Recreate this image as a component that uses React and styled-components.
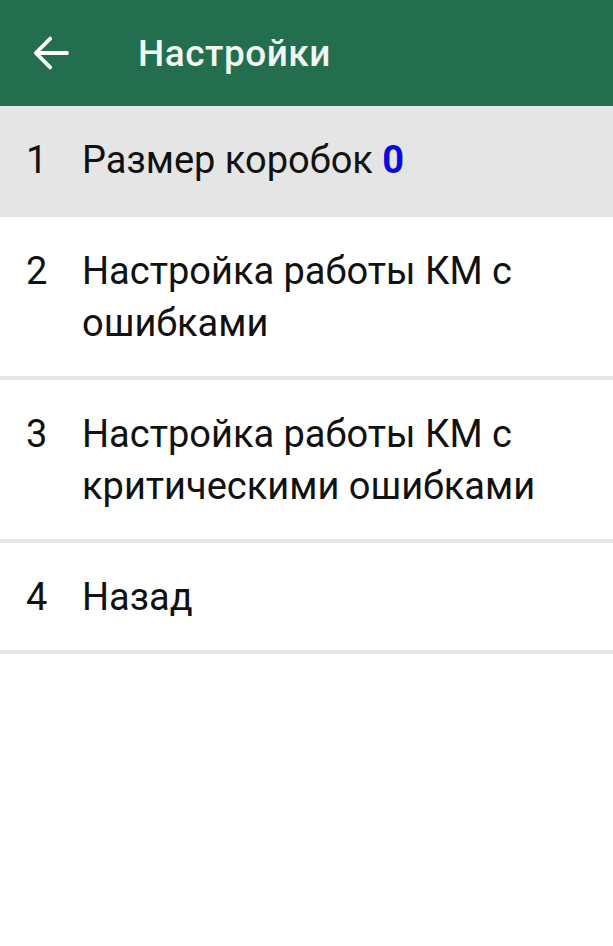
import React from "react";
import styled, { createGlobalStyle } from "styled-components";

const Global = createGlobalStyle`
  html, body { margin: 0; padding: 0; background: #ffffff; }
  body { font-family: Roboto, "Noto Sans", Arial, sans-serif; }
`;

const Screen = styled.div`
  width: 613px;
  min-height: 946px;
  background: #ffffff;
  display: flex;
  flex-direction: column;
`;

const AppBar = styled.header`
  height: 106px;
  background: #226e4f;
  display: flex;
  align-items: center;
  padding-left: 27px;
  box-sizing: border-box;
`;

const BackButton = styled.button`
  width: 48px;
  height: 48px;
  padding: 0;
  border: none;
  background: transparent;
  display: flex;
  align-items: center;
  justify-content: center;
  color: #ffffff;
  margin-right: 63px;
`;

const Title = styled.h1`
  margin: 0;
  font-family: Roboto, sans-serif;
  font-weight: 500;
  font-size: 37px;
  color: #f1f7f3;
  letter-spacing: 0.5px;
`;

const Menu = styled.ul`
  list-style: none;
  margin: 0;
  padding: 0;
`;

const Item = styled.li`
  display: grid;
  grid-template-columns: 56px 1fr;
  padding: 27.5px 20px 27.5px 26px;
  font-family: Roboto, sans-serif;
  font-size: 38px;
  line-height: 52px;
  color: #111111;
  background: ${(p) => (p.$active ? "#e5e5e5" : "#ffffff")};
  border-bottom: 4px solid ${(p) => (p.$active ? "#e5e5e5" : "#e6e6e6")};
`;

const Num = styled.span``;

const Label = styled.span``;

const Count = styled.b`
  color: #0a0adf;
  font-weight: 700;
`;

const ArrowBack = () => (
  <svg width="48" height="48" viewBox="0 0 24 24" fill="none">
    <path
      d="M20 12H4.8M11.6 4.8L4.4 12l7.2 7.2"
      stroke="currentColor"
      strokeWidth="1.9"
      strokeLinecap="round"
      strokeLinejoin="round"
    />
  </svg>
);

const items = [
  { n: 1, label: "Размер коробок", count: 0, active: true },
  { n: 2, label: "Настройка работы КМ с ошибками" },
  { n: 3, label: "Настройка работы КМ с критическими ошибками" },
  { n: 4, label: "Назад" },
];

export default function App() {
  return (
    <>
      <Global />
      <Screen>
        <AppBar>
          <BackButton aria-label="Назад">
            <ArrowBack />
          </BackButton>
          <Title>Настройки</Title>
        </AppBar>
        <Menu>
          {items.map((it) => (
            <Item key={it.n} $active={it.active}>
              <Num>{it.n}</Num>
              <Label>
                {it.label}
                {it.count !== undefined && (
                  <>
                    {" "}
                    <Count>{it.count}</Count>
                  </>
                )}
              </Label>
            </Item>
          ))}
        </Menu>
      </Screen>
    </>
  );
}
